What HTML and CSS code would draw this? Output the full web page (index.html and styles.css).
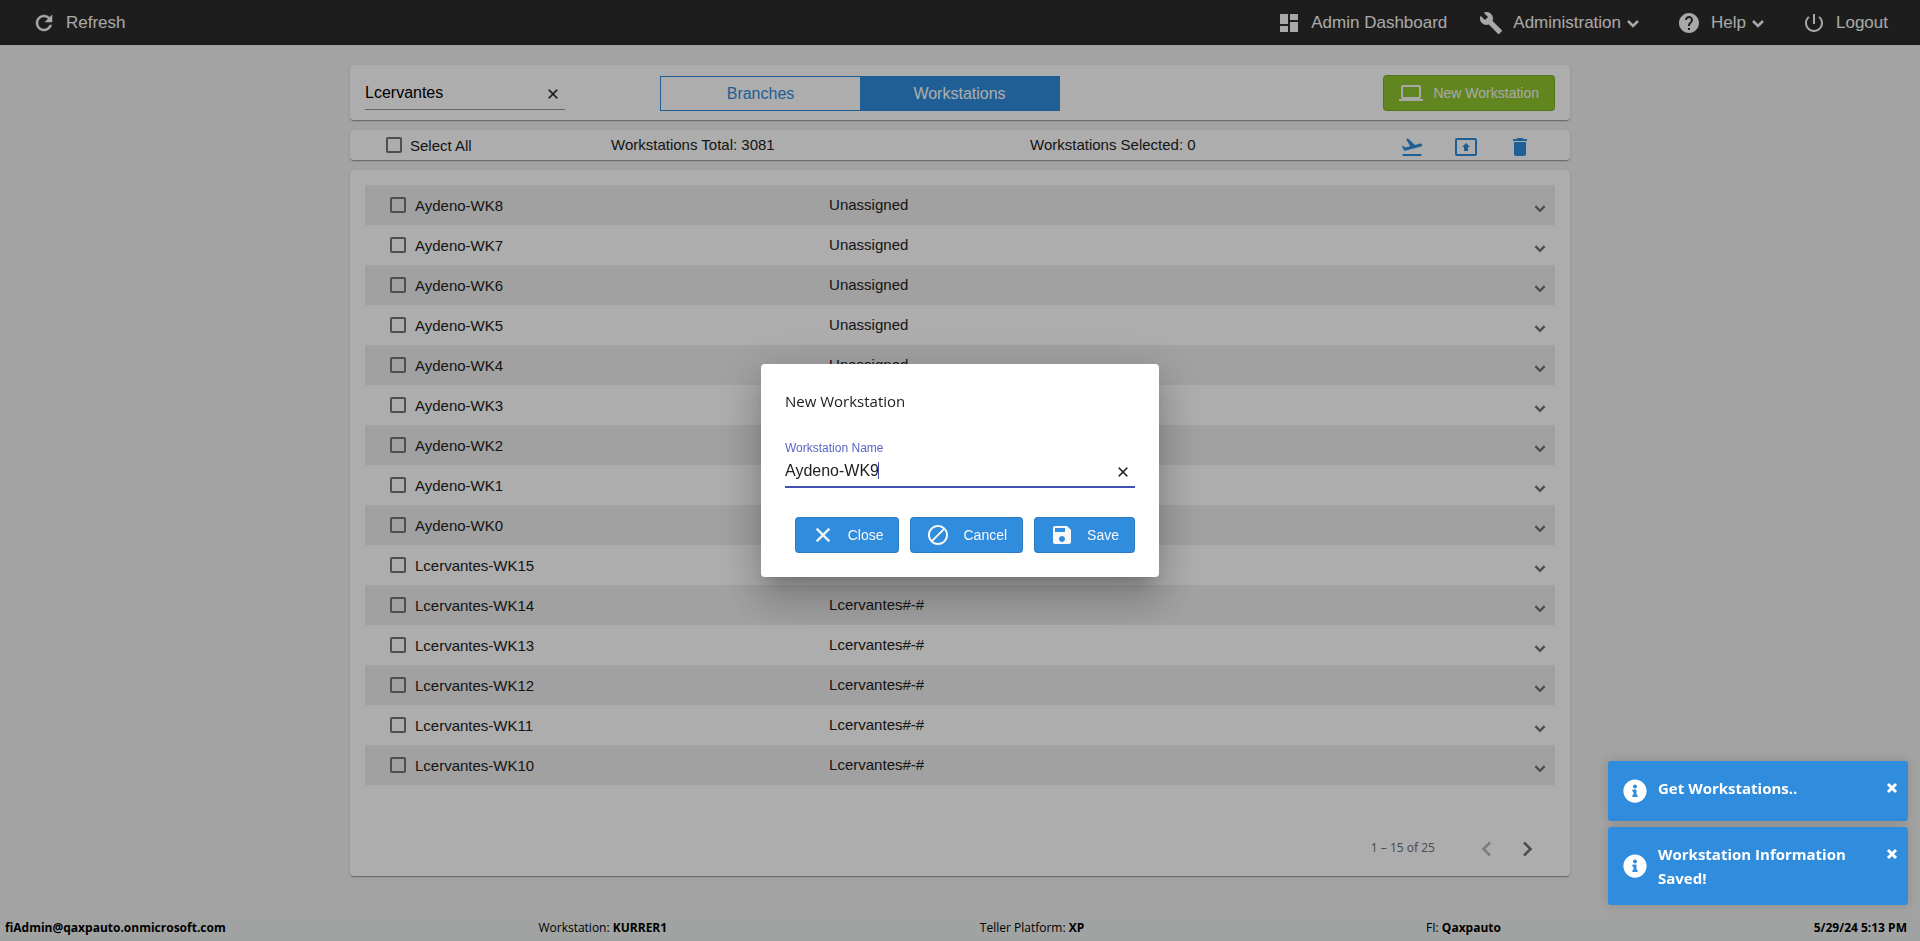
FILE: index.html
```html
<!DOCTYPE html>
<html lang="en">
<head>
    <meta charset="UTF-8">
    <meta name="viewport" content="width=device-width, initial-scale=1.0">
    <title>Workstations</title>
    <link rel="stylesheet" href="styles.css">
</head>
<body>
    <!-- Icon sprite -->
    <svg class="sprite" aria-hidden="true">
        <symbol id="i-refresh" viewBox="0 0 24 24"><path d="M17.65 6.35C16.2 4.9 14.21 4 12 4c-4.42 0-7.99 3.58-7.99 8s3.57 8 7.99 8c3.73 0 6.84-2.55 7.73-6h-2.08c-.82 2.33-3.04 4-5.65 4-3.31 0-6-2.69-6-6s2.69-6 6-6c1.66 0 3.14.69 4.22 1.78L13 11h7V4l-2.35 2.35z" stroke="currentColor" stroke-width=".5"/></symbol>
        <symbol id="i-dashboard" viewBox="0 0 24 24"><path d="M3 13h8V3H3v10zm0 8h8v-6H3v6zm10 0h8V11h-8v10zm0-18v6h8V3h-8z"/></symbol>
        <symbol id="i-build" viewBox="0 0 24 24"><path d="M22.7 19l-9.1-9.1c.9-2.3.4-5-1.5-6.9-2-2-5-2.4-7.4-1.3L9 6 6 9 1.6 4.7C.4 7.1.9 10.1 2.9 12.1c1.9 1.9 4.6 2.4 6.9 1.5l9.1 9.1c.4.4 1 .4 1.4 0l2.3-2.3c.5-.4.5-1.1.1-1.4z"/></symbol>
        <symbol id="i-help" viewBox="0 0 24 24"><path d="M12 2C6.48 2 2 6.48 2 12s4.48 10 10 10 10-4.48 10-10S17.52 2 12 2zm1 17h-2v-2h2v2zm2.07-7.75l-.9.92C13.45 12.9 13 13.5 13 15h-2v-.5c0-1.1.45-2.1 1.17-2.83l1.24-1.26c.37-.36.59-.86.59-1.41 0-1.1-.9-2-2-2s-2 .9-2 2H8c0-2.21 1.79-4 4-4s4 1.79 4 4c0 .88-.36 1.68-.93 2.25z"/></symbol>
        <symbol id="i-power" viewBox="0 0 24 24"><path d="M13 3h-2v10h2V3zm4.83 2.17l-1.42 1.42C17.99 7.86 19 9.81 19 12c0 3.87-3.13 7-7 7s-7-3.13-7-7c0-2.19 1.01-4.14 2.58-5.42L6.17 5.17C4.23 6.82 3 9.26 3 12c0 4.97 4.03 9 9 9s9-4.03 9-9c0-2.74-1.23-5.18-3.17-6.83z"/></symbol>
        <symbol id="i-computer" viewBox="0 0 24 24"><path d="M20 18c1.1 0 1.99-.9 1.99-2L22 6c0-1.1-.9-2-2-2H4c-1.1 0-2 .9-2 2v10c0 1.1.9 2 2 2H0v2h24v-2h-4zM4 6h16v10H4V6z"/></symbol>
        <symbol id="i-takeoff" viewBox="0 0 24 24"><path d="M2.5 19h19v2h-19zm19.57-9.36c-.21-.8-1.04-1.28-1.84-1.06L14.92 10l-6.9-6.43-1.93.51 4.14 7.17-4.97 1.33-1.97-1.54-1.45.39 1.82 3.16.77 1.33 1.6-.43 5.31-1.42 4.35-1.16L21 11.49c.81-.23 1.28-1.05 1.07-1.85z"/></symbol>
        <symbol id="i-present" viewBox="0 0 24 24"><path d="M21 3H3c-1.11 0-2 .89-2 2v14c0 1.11.89 2 2 2h18c1.11 0 2-.89 2-2V5c0-1.11-.89-2-2-2zm0 16.02H3V4.98h18v14.04zM10 12H8l4-4 4 4h-2v4h-4v-4z"/></symbol>
        <symbol id="i-delete" viewBox="0 0 24 24"><path d="M6 19c0 1.1.9 2 2 2h8c1.1 0 2-.9 2-2V7H6v12zM19 4h-3.5l-1-1h-5l-1 1H5v2h14V4z"/></symbol>
        <symbol id="i-close" viewBox="0 0 24 24"><path d="M19 6.41L17.59 5 12 10.59 6.41 5 5 6.41 10.59 12 5 17.59 6.41 19 12 13.41 17.59 19 19 17.59 13.41 12z" stroke="currentColor" stroke-width=".4"/></symbol>
        <symbol id="i-block" viewBox="0 0 24 24"><path d="M12 2C6.48 2 2 6.48 2 12s4.48 10 10 10 10-4.48 10-10S17.52 2 12 2zM4 12c0-4.42 3.58-8 8-8 1.85 0 3.55.63 4.9 1.69L5.69 16.9C4.63 15.55 4 13.85 4 12zm8 8c-1.85 0-3.55-.63-4.9-1.69L18.31 7.1C19.37 8.45 20 10.15 20 12c0 4.42-3.58 8-8 8z"/></symbol>
        <symbol id="i-save" viewBox="0 0 24 24"><path d="M17 3H5c-1.11 0-2 .9-2 2v14c0 1.1.89 2 2 2h14c1.1 0 2-.9 2-2V7l-4-4zm-5 16c-1.66 0-3-1.34-3-3s1.34-3 3-3 3 1.34 3 3-1.34 3-3 3zm3-10H5V5h10v4z"/></symbol>
        <symbol id="i-down" viewBox="0 0 24 24"><path d="M7 10l5 5 5-5" fill="none" stroke="currentColor" stroke-width="2.6"/></symbol>
        <symbol id="i-left" viewBox="0 0 24 24"><path d="M15 5.5L8.500 12l6.500 6.500" fill="none" stroke="currentColor" stroke-width="2.6"/></symbol>
        <symbol id="i-right" viewBox="0 0 24 24"><path d="M9 5.5l6.500 6.500L9 18.500" fill="none" stroke="currentColor" stroke-width="2.6"/></symbol>
        <symbol id="i-info" viewBox="0 0 512 512"><path d="M256 8C119.043 8 8 119.083 8 256c0 136.997 111.043 248 248 248s248-111.003 248-248C504 119.083 392.957 8 256 8zm0 110c23.196 0 42 18.804 42 42s-18.804 42-42 42-42-18.804-42-42 18.804-42 42-42zm56 254c0 6.627-5.373 12-12 12h-88c-6.627 0-12-5.373-12-12v-24c0-6.627 5.373-12 12-12h12v-64h-12c-6.627 0-12-5.373-12-12v-24c0-6.627 5.373-12 12-12h64c6.627 0 12 5.373 12 12v100h12c6.627 0 12 5.373 12 12v24z"/></symbol>
        <symbol id="i-times" viewBox="0 0 12 12"><path d="M2 2l8 8M10 2l-8 8" fill="none" stroke="currentColor" stroke-width="3"/></symbol>
    </svg>

    <header class="topbar">
        <button type="button" class="nav-item"><svg class="icon"><use href="#i-refresh"/></svg>Refresh</button>
        <nav class="menu">
            <a href="#" class="nav-item"><svg class="icon"><use href="#i-dashboard"/></svg>Admin Dashboard</a>
            <button type="button" class="nav-item"><svg class="icon"><use href="#i-build"/></svg>Administration<svg class="icon caret-down"><use href="#i-down"/></svg></button>
            <button type="button" class="nav-item"><svg class="icon"><use href="#i-help"/></svg>Help<svg class="icon caret-down"><use href="#i-down"/></svg></button>
            <a href="#" class="nav-item"><svg class="icon"><use href="#i-power"/></svg>Logout</a>
        </nav>
    </header>

    <main class="content">
        <section class="card toolbar">
            <div class="search">
                <input type="text" value="Lcervantes" aria-label="Search">
                <button type="button" class="clear-btn" aria-label="Clear search"><svg class="icon"><use href="#i-close"/></svg></button>
            </div>
            <div class="toggle">
                <button type="button">Branches</button>
                <button type="button" class="active">Workstations</button>
            </div>
            <button type="button" class="btn btn-green"><svg class="icon"><use href="#i-computer"/></svg>New Workstation</button>
        </section>

        <section class="card select-bar">
            <label class="select-all"><input type="checkbox" class="check">Select All</label>
            <span class="count">Workstations Total: 3081</span>
            <span class="count">Workstations Selected: 0</span>
            <div class="actions">
                <button type="button" aria-label="Assign"><svg class="icon"><use href="#i-takeoff"/></svg></button>
                <button type="button" aria-label="Upload"><svg class="icon"><use href="#i-present"/></svg></button>
                <button type="button" aria-label="Delete"><svg class="icon"><use href="#i-delete"/></svg></button>
            </div>
        </section>

        <section class="card list">
            <table class="workstations">
                <tbody>
                    <tr><td class="name"><label><input type="checkbox" class="check">Aydeno-WK8</label></td><td class="branch">Unassigned</td><td class="expand"><button type="button" aria-label="Expand"><svg class="icon"><use href="#i-down"/></svg></button></td></tr>
                    <tr><td class="name"><label><input type="checkbox" class="check">Aydeno-WK7</label></td><td class="branch">Unassigned</td><td class="expand"><button type="button" aria-label="Expand"><svg class="icon"><use href="#i-down"/></svg></button></td></tr>
                    <tr><td class="name"><label><input type="checkbox" class="check">Aydeno-WK6</label></td><td class="branch">Unassigned</td><td class="expand"><button type="button" aria-label="Expand"><svg class="icon"><use href="#i-down"/></svg></button></td></tr>
                    <tr><td class="name"><label><input type="checkbox" class="check">Aydeno-WK5</label></td><td class="branch">Unassigned</td><td class="expand"><button type="button" aria-label="Expand"><svg class="icon"><use href="#i-down"/></svg></button></td></tr>
                    <tr><td class="name"><label><input type="checkbox" class="check">Aydeno-WK4</label></td><td class="branch">Unassigned</td><td class="expand"><button type="button" aria-label="Expand"><svg class="icon"><use href="#i-down"/></svg></button></td></tr>
                    <tr><td class="name"><label><input type="checkbox" class="check">Aydeno-WK3</label></td><td class="branch">Unassigned</td><td class="expand"><button type="button" aria-label="Expand"><svg class="icon"><use href="#i-down"/></svg></button></td></tr>
                    <tr><td class="name"><label><input type="checkbox" class="check">Aydeno-WK2</label></td><td class="branch">Unassigned</td><td class="expand"><button type="button" aria-label="Expand"><svg class="icon"><use href="#i-down"/></svg></button></td></tr>
                    <tr><td class="name"><label><input type="checkbox" class="check">Aydeno-WK1</label></td><td class="branch">Unassigned</td><td class="expand"><button type="button" aria-label="Expand"><svg class="icon"><use href="#i-down"/></svg></button></td></tr>
                    <tr><td class="name"><label><input type="checkbox" class="check">Aydeno-WK0</label></td><td class="branch">Unassigned</td><td class="expand"><button type="button" aria-label="Expand"><svg class="icon"><use href="#i-down"/></svg></button></td></tr>
                    <tr><td class="name"><label><input type="checkbox" class="check">Lcervantes-WK15</label></td><td class="branch">Lcervantes#-#</td><td class="expand"><button type="button" aria-label="Expand"><svg class="icon"><use href="#i-down"/></svg></button></td></tr>
                    <tr><td class="name"><label><input type="checkbox" class="check">Lcervantes-WK14</label></td><td class="branch">Lcervantes#-#</td><td class="expand"><button type="button" aria-label="Expand"><svg class="icon"><use href="#i-down"/></svg></button></td></tr>
                    <tr><td class="name"><label><input type="checkbox" class="check">Lcervantes-WK13</label></td><td class="branch">Lcervantes#-#</td><td class="expand"><button type="button" aria-label="Expand"><svg class="icon"><use href="#i-down"/></svg></button></td></tr>
                    <tr><td class="name"><label><input type="checkbox" class="check">Lcervantes-WK12</label></td><td class="branch">Lcervantes#-#</td><td class="expand"><button type="button" aria-label="Expand"><svg class="icon"><use href="#i-down"/></svg></button></td></tr>
                    <tr><td class="name"><label><input type="checkbox" class="check">Lcervantes-WK11</label></td><td class="branch">Lcervantes#-#</td><td class="expand"><button type="button" aria-label="Expand"><svg class="icon"><use href="#i-down"/></svg></button></td></tr>
                    <tr><td class="name"><label><input type="checkbox" class="check">Lcervantes-WK10</label></td><td class="branch">Lcervantes#-#</td><td class="expand"><button type="button" aria-label="Expand"><svg class="icon"><use href="#i-down"/></svg></button></td></tr>
                </tbody>
            </table>
            <div class="paginator">
                <span class="range">1 – 15 of 25</span>
                <button type="button" aria-label="Previous page" disabled><svg class="icon"><use href="#i-left"/></svg></button>
                <button type="button" aria-label="Next page"><svg class="icon"><use href="#i-right"/></svg></button>
            </div>
        </section>
    </main>

    <footer class="statusbar">
        <span><strong>fiAdmin@qaxpauto.onmicrosoft.com</strong></span>
        <span>Workstation: <strong>KURRER1</strong></span>
        <span class="platform">Teller Platform: <strong>XP</strong></span>
        <span>FI: <strong>Qaxpauto</strong></span>
        <span><strong>5/29/24 5:13 PM</strong></span>
    </footer>

    <!-- New workstation dialog -->
    <div class="overlay">
        <form class="dialog" role="dialog" aria-labelledby="dialogTitle">
            <h2 id="dialogTitle">New Workstation</h2>
            <div class="field">
                <label for="workstationName">Workstation Name</label>
                <div class="field-row">
                    <input type="text" id="workstationName" value="Aydeno-WK9">
                    <span class="text-caret"></span>
                    <button type="button" class="clear-btn" aria-label="Clear name"><svg class="icon"><use href="#i-close"/></svg></button>
                </div>
            </div>
            <div class="dialog-actions">
                <button type="button" class="btn"><svg class="icon"><use href="#i-close"/></svg>Close</button>
                <button type="button" class="btn"><svg class="icon"><use href="#i-block"/></svg>Cancel</button>
                <button type="submit" class="btn"><svg class="icon"><use href="#i-save"/></svg>Save</button>
            </div>
        </form>
    </div>

    <!-- Toasts -->
    <div class="toasts">
        <div class="toast" role="status">
            <svg class="icon"><use href="#i-info"/></svg>
            <p>Get Workstations..</p>
            <button type="button" aria-label="Dismiss"><svg class="icon"><use href="#i-times"/></svg></button>
        </div>
        <div class="toast" role="status">
            <svg class="icon"><use href="#i-info"/></svg>
            <p>Workstation Information Saved!</p>
            <button type="button" aria-label="Dismiss"><svg class="icon"><use href="#i-times"/></svg></button>
        </div>
    </div>
</body>
</html>
```
FILE: styles.css
```css
* {
    margin: 0;
    padding: 0;
    box-sizing: border-box;
}

body {
    font-family: "Liberation Sans", Arial, sans-serif;
    font-size: 15px;
    color: #212121;
    background: #f1f1f1;
    min-height: 100vh;
    display: flex;
    flex-direction: column;
}

button,
input {
    font: inherit;
    color: inherit;
    background: none;
    border: none;
    outline: none;
}

button {
    cursor: pointer;
}

.sprite {
    display: none;
}

.icon {
    display: block;
    width: 24px;
    height: 24px;
    flex: none;
    fill: currentColor;
}

/* Top bar */
.topbar {
    display: flex;
    align-items: center;
    justify-content: space-between;
    height: 45px;
    padding: 0 32px;
    background: #2c2c2c;
    color: #f8f8f8;
    font-size: 17px;
}

.menu {
    display: flex;
    gap: 32px;
}

.nav-item {
    display: flex;
    align-items: center;
    gap: 10px;
    color: inherit;
    text-decoration: none;
}

.caret-down {
    margin-left: -10px;
}

/* Cards */
.content {
    display: flex;
    flex-direction: column;
    gap: 10px;
    width: 100%;
    max-width: 1220px;
    margin: 0 auto;
    padding: 20px 0 39px;
}

.card {
    background: white;
    border-radius: 4px;
    box-shadow: 0 2px 1px -1px rgba(0,0,0,0.2), 0 1px 1px 0 rgba(0,0,0,0.14), 0 1px 3px 0 rgba(0,0,0,0.12);
}

.toolbar {
    display: flex;
    align-items: flex-start;
    height: 55px;
    padding: 10px 15px 0;
}

.search {
    display: flex;
    align-items: center;
    width: 200px;
    height: 35px;
    padding-top: 2px;
    border-bottom: 1px solid #949494;
}

.search input {
    flex: 1;
    min-width: 0;
    font-size: 16px;
    color: black;
}

.clear-btn .icon {
    width: 16px;
    height: 16px;
}

.search .clear-btn {
    padding: 2px 4px 0;
}

.toggle {
    display: flex;
    width: 400px;
    margin: 1px 0 0 95px;
    border: 1px solid #308cdc;
    font-size: 16px;
}

.toggle button {
    flex: 1;
    height: 33px;
    color: #308cdc;
}

.toggle .active {
    background: #308cdc;
    color: white;
}

.btn {
    display: flex;
    align-items: center;
    gap: 13px;
    height: 36px;
    padding: 0 16px;
    border-radius: 4px;
    background: #308cdc;
    box-shadow: inset 0 0 0 1px rgba(0,0,0,0.12);
    color: #f8f8f8;
    font-size: 14px;
}

.btn-green {
    gap: 10px;
    margin-left: auto;
    background: #90c52f;
}

.select-bar {
    display: grid;
    grid-template-columns: 225fr 419fr 370fr 132px;
    align-items: center;
    height: 30px;
    padding: 0 38px 0 36px;
}

.count {
    padding-bottom: 2px;
}

.check {
    appearance: none;
    width: 16px;
    height: 16px;
    border: 2px solid #757575;
    border-radius: 2px;
}

.select-all {
    display: flex;
    align-items: center;
    gap: 8px;
}

.actions {
    display: flex;
    gap: 30px;
    padding-top: 4px;
    color: #308cdc;
}

/* Workstation list */
.list {
    padding: 15px 15px 0;
}

.workstations {
    width: 100%;
    table-layout: fixed;
    border-collapse: collapse;
}

.workstations tr {
    height: 40px;
}

.workstations tr:nth-child(odd) {
    background: #ededed;
}

.workstations .name {
    width: 39%;
    padding-left: 25px;
}

.workstations label {
    display: flex;
    align-items: center;
    gap: 9px;
}

.branch {
    padding-bottom: 2px;
}

.expand {
    width: 26px;
    color: #757575;
}

.expand button {
    display: block;
    padding-top: 6px;
}

.expand .icon {
    width: 22px;
    height: 22px;
}

.paginator {
    display: flex;
    align-items: flex-start;
    justify-content: flex-end;
    height: 91px;
    padding: 38px 8px 0 0;
    font-family: "Noto Sans", sans-serif;
    font-size: 12px;
    color: #757575;
}

.range {
    line-height: 50px;
    margin-right: 32px;
}

.paginator button {
    padding: 14px 8px;
}

.paginator button:disabled {
    opacity: 0.5;
}

/* Status bar */
.statusbar {
    display: flex;
    justify-content: space-between;
    margin-top: auto;
    padding: 0 13px 0 5px;
    background: #ecf0ee;
    color: black;
    font-family: "Open Sans", sans-serif;
    font-size: 12px;
    line-height: 26px;
}

.platform {
    margin-right: 29px;
}

/* Dialog */
.overlay {
    position: fixed;
    inset: 0;
    display: flex;
    align-items: center;
    justify-content: center;
    background: rgba(0,0,0,0.32);
}

.dialog {
    width: 398px;
    padding: 24px;
    border-radius: 4px;
    background: white;
    box-shadow: 0 11px 15px -7px rgba(0,0,0,0.2), 0 24px 38px 3px rgba(0,0,0,0.14), 0 9px 46px 8px rgba(0,0,0,0.12);
}

.dialog h2 {
    font-family: "Open Sans", sans-serif;
    font-size: 15px;
    font-weight: normal;
    line-height: 26px;
    margin-bottom: 27px;
}

.field {
    border-bottom: 2px solid #3f51b5;
}

.field label {
    display: block;
    font-size: 12px;
    line-height: 14px;
    color: #5767c4;
}

.field-row {
    position: relative;
    display: flex;
    align-items: center;
    height: 31px;
}

.field-row input {
    flex: 1;
    min-width: 0;
    font-size: 16px;
}

.field-row .clear-btn {
    padding: 2px 4px 0;
}

.text-caret {
    position: absolute;
    left: 93px;
    top: 7px;
    width: 1px;
    height: 17px;
    background: #3f51b5;
}

.dialog-actions {
    display: flex;
    justify-content: flex-end;
    gap: 11px;
    margin-top: 29px;
}

/* Toasts */
.toasts {
    position: fixed;
    right: 12px;
    bottom: 36px;
    display: flex;
    flex-direction: column;
    gap: 6px;
    width: 300px;
}

.toast {
    display: flex;
    align-items: center;
    gap: 11px;
    min-height: 60px;
    padding: 15px 10px 15px 15px;
    border-radius: 3px;
    background: #308cdc;
    box-shadow: 0 0 12px rgba(0,0,0,0.15);
    color: white;
    font-family: "Open Sans", sans-serif;
    font-size: 15px;
    font-weight: bold;
    line-height: 24px;
}

.toast p {
    flex: 1;
    align-self: flex-start;
}

.toast button {
    align-self: flex-start;
    padding-top: 6px;
}

.toast button .icon {
    width: 12px;
    height: 12px;
}
```
